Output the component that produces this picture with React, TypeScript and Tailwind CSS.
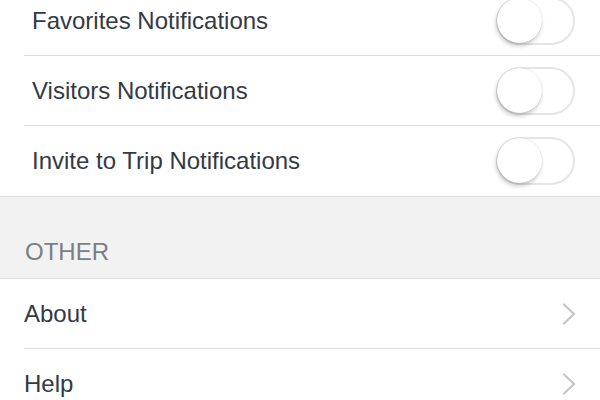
import React from "react";

function Toggle() {
  return (
    <div className="relative w-[79px] h-[48px] rounded-full border-2 border-[#e5e5e5] bg-white">
      <div className="absolute left-[-1px] top-[-1px] w-[45px] h-[45px] rounded-full bg-white shadow-[-1px_3px_4px_rgba(0,0,0,0.22),0_0_1px_rgba(0,0,0,0.2)]" />
    </div>
  );
}

function Chevron() {
  return (
    <svg width="14" height="22" viewBox="0 0 14 22" className="block">
      <path d="M2 1.5 L12 11 L2 20.5" fill="none" stroke="#c5c5ca" strokeWidth="2.2" strokeLinecap="round" strokeLinejoin="round" />
    </svg>
  );
}

function ToggleRow({ label, last }: { label: string; last?: boolean }) {
  return (
    <div className="pl-6 bg-white">
      <div
        className={
          "flex items-center justify-between h-[70px] pl-2 pr-[25px] " +
          (last ? "" : "border-b border-[#dcdcdc]")
        }
      >
        <span className="text-[24px] text-[#323a45]">{label}</span>
        <Toggle />
      </div>
    </div>
  );
}

function LinkRow({ label, last }: { label: string; last?: boolean }) {
  return (
    <div className="pl-6 bg-white">
      <div
        className={
          "flex items-center justify-between h-[70px] pr-[24px] " +
          (last ? "" : "border-b border-[#dcdcdc]")
        }
      >
        <span className="text-[24px] text-[#323a45]">{label}</span>
        <Chevron />
      </div>
    </div>
  );
}

export default function App() {
  return (
    <div className="w-[600px] h-[400px] overflow-hidden bg-white font-['Liberation_Sans',Arial,sans-serif]">
      <div className="mt-[-14px]">
        <ToggleRow label="Favorites Notifications" />
        <ToggleRow label="Visitors Notifications" />
        <ToggleRow label="Invite to Trip Notifications" last />
        <div className="h-[83px] bg-[#f2f2f2] border-y border-[#dcdcdc] flex items-end pl-[25px] pb-[14px]">
          <span className="text-[24px] text-[#7a7e85] leading-none">OTHER</span>
        </div>
        <LinkRow label="About" />
        <LinkRow label="Help" />
      </div>
    </div>
  );
}
